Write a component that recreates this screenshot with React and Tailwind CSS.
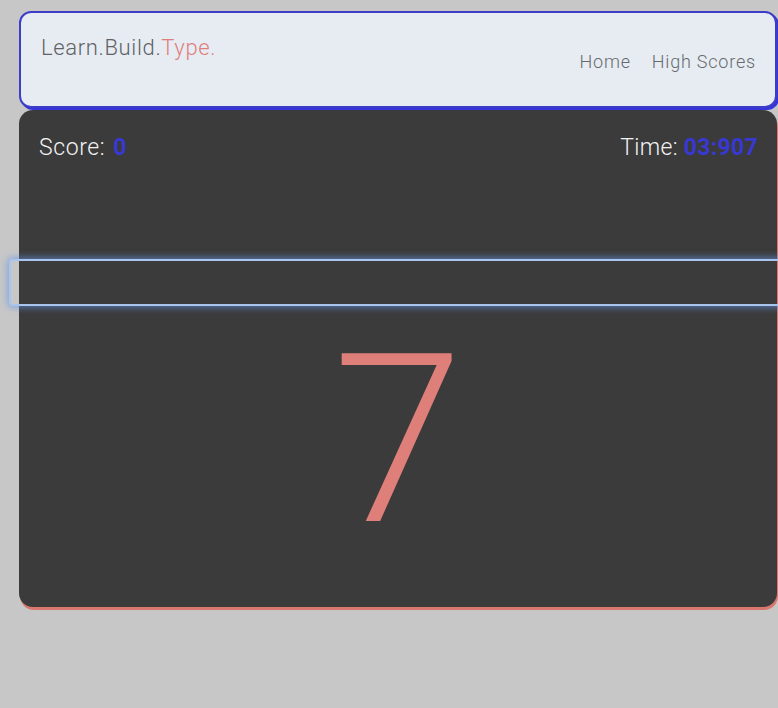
export default function App() {
  const font = { fontFamily: 'Roboto, "Liberation Sans", sans-serif' };
  return (
    <div className="min-h-[708px] w-[778px] bg-[#c7c7c7] pl-[19px] pt-[11px] overflow-hidden" style={font}>
      <header className="w-[758px] h-[97px] rounded-[12px] border-2 border-[#3d3dc8] bg-[#e7ecf2] shadow-[2px_2px_0_#3535d9] flex justify-between pl-[20px] pr-[19px]">
        <div className="pt-[18px] text-[22px] font-light text-[#5f6366] tracking-[0.65px]">
          Learn.Build.<span className="text-[#df7f7d]">Type.</span>
        </div>
        <nav className="pt-[35px] flex gap-[21px] text-[18px] font-light text-[#666a6e] tracking-[0.8px]">
          <span>Home</span>
          <span>High Scores</span>
        </nav>
      </header>
      <main className="mt-[2px] w-[758px] h-[497px] rounded-[14px] bg-[#3b3b3b] shadow-[1px_3px_0_#d9776f] flex flex-col">
        <div className="flex justify-between pl-[20px] pr-[19px] pt-[21px] text-[23px] font-light text-[#f2f2f2] tracking-[0.6px]">
          <div>
            Score:<span className="inline-block w-[8px]"></span><span className="font-bold text-[#3838d4]">0</span>
          </div>
          <div className="tracking-[0.3px]">
            Time: <span className="font-bold text-[#3838d4]">03:907</span>
          </div>
        </div>
        <div className="mt-[93px] -ml-[10px] w-[790px] h-[47px] rounded-[4px] border-2 border-[#a9c4ee] shadow-[0_0_6px_2px_rgba(102,150,230,0.6)] bg-transparent"></div>
        <div className="flex justify-center mt-[17px] text-[235px] leading-none font-light text-[#df7f7a]">
          7
        </div>
      </main>
    </div>
  );
}
